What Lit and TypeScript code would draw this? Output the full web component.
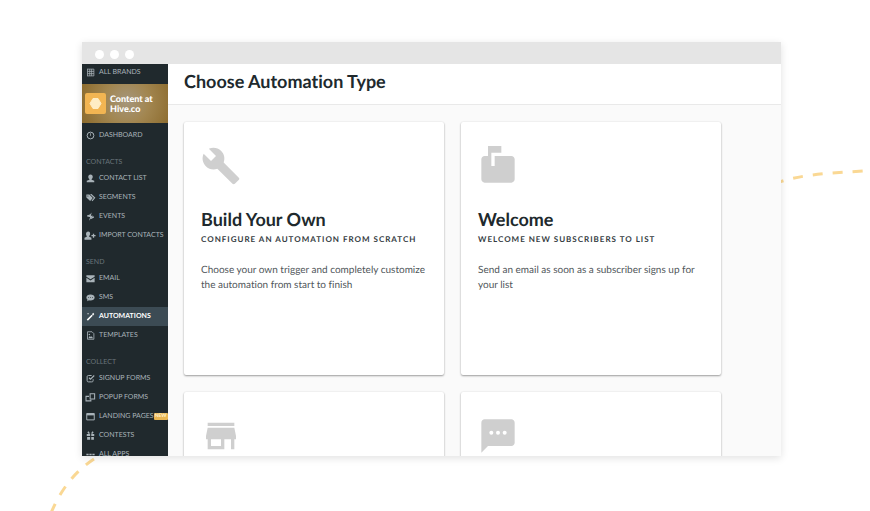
import { LitElement, html, css, svg } from "lit";
import { customElement, property } from "lit/decorators.js";

const icons: Record<string, unknown> = {
  brands: svg`<path d="M4 2v20M10 3v18M15 3v18M21 3v18M4 3h17M4 9h17M4 15h17M4 21h17" fill="none" stroke="currentColor" stroke-width="2"/>`,
  dashboard: svg`<circle cx="12" cy="12" r="9" fill="none" stroke="currentColor" stroke-width="2.6"/><path d="M11 6h2v6l-1 2-1-2z"/>`,
  person: svg`<path d="M12 1c4 0 6 3 6 6 0 3-1.500 5-3 6v2l7 3v4H2v-4l7-3v-2c-1.500-1-3-3-3-6 0-3 2-6 6-6z"/>`,
  tags: svg`<path d="M1 4h8l9 9-7 8-10-9z"/><path d="M12 4h2l9 9-7 8" fill="none" stroke="currentColor" stroke-width="3"/><circle cx="5" cy="8" r="1.500" fill="#20292d"/>`,
  events: svg`<path d="M15 1L5 13h6l-3 10 11-13h-6z"/><path d="M3 11l8-3M13 17l8-4" stroke="currentColor" stroke-width="3"/>`,
  personAdd: svg`<path d="M6 1c4 0 5 3 5 6s-1 4.500-2.500 6v2l6 3v5H-4v-5l6-3v-2C.5 11.500 0 10 0 7s2-6 6-6z"/><path d="M20 7v11M14.500 12.500h11" stroke="currentColor" stroke-width="3.500"/>`,
  email: svg`<path d="M1 3h22v4l-11 7L1 7zM1 10l11 7 11-7v12H1z"/>`,
  sms: svg`<path d="M12 4c6 0 11 3 11 8s-5 8-11 8c-2 0-3 0-4-.5L3 22l1-4c-2-2-3-4-3-6 0-5 5-8 11-8z"/><path d="M6 11h2v2H6zM11 11h2v2h-2zM16 11h2v2h-2z" fill="#20292d"/>`,
  wand: svg`<path d="M2 20L15 7l3 3L5 23zM16 6l3-4 3 3-3 4zM4 3h3v3H4z"/>`,
  templates: svg`<path d="M4 2h12l5 5v15H4z" fill="none" stroke="currentColor" stroke-width="2.200"/><path d="M6 19l4-6 3 3 2-2 4 5z"/><circle cx="9" cy="9" r="2"/>`,
  signup: svg`<path d="M15 4H7C4 4 3 5 3 8v9c0 3 1 4 4 4h8c3 0 4-1 4-4v-3" fill="none" stroke="currentColor" stroke-width="2.600"/><path d="M8 10l4 4L22 4" fill="none" stroke="currentColor" stroke-width="3"/>`,
  popup: svg`<path d="M11 2h12v14H11zM8 9H0v12h13v-3" fill="none" stroke="currentColor" stroke-width="2.800"/>`,
  landing: svg`<path d="M2 4h20v17H2z" fill="none" stroke="currentColor" stroke-width="2.600"/><path d="M2 4h20v5H2z"/>`,
  contests: svg`<path d="M2 8h9v5H2zM14 8h8v5h-8zM3 16h8v7H3zM14 16h7v7h-7z"/><path d="M9 7L5 2M15 7l4-5" stroke="currentColor" stroke-width="4"/>`,
  apps: svg`<path d="M1 10h6v4H1zM9 10h6v4H9zM17 10h6v4h-6z"/>`,
  build: svg`<path d="M22.700 19l-9.100-9.100c.9-2.300.4-5-1.500-6.900-2-2-5-2.400-7.400-1.300L9 6 6 9 1.600 4.700C.4 7.100.9 10.100 2.900 12.100c1.900 1.900 4.600 2.400 6.900 1.500l9.100 9.100c.4.4 1 .4 1.400 0l2.300-2.300c.5-.4.5-1.100.1-1.400z"/>`,
  mailbox: svg`<path d="M20 6H10v6H8V4h6V0H6v6H4c-1.100 0-2 .9-2 2v12c0 1.100.9 2 2 2h16c1.100 0 2-.9 2-2V8c0-1.100-.9-2-2-2z"/>`,
  store: svg`<path d="M20 4H4v2h16V4zm1 10v-2l-1-5H4l-1 5v2h1v6h10v-6h4v6h2v-6h1zm-9 4H6v-4h6v4z"/>`,
  chat: svg`<path d="M20 2H4c-1.100 0-1.990.9-1.990 2L2 22l4-4h14c1.100 0 2-.9 2-2V4c0-1.100-.9-2-2-2z"/><g fill="#fff"><circle cx="8" cy="10" r="1.200"/><circle cx="12" cy="10" r="1.200"/><circle cx="16" cy="10" r="1.200"/></g>`,
};

const icon = (name: string) =>
  html`<svg class="icon" viewBox="0 0 24 24" fill="currentColor" aria-hidden="true">${icons[name]}</svg>`;

interface Item { label: string; icon: string; active?: boolean; badge?: string }
interface Group { title: string; items: Item[] }

const groups: Group[] = [
  { title: "Contacts", items: [
    { label: "Contact List", icon: "person" },
    { label: "Segments", icon: "tags" },
    { label: "Events", icon: "events" },
    { label: "Import Contacts", icon: "personAdd" },
  ] },
  { title: "Send", items: [
    { label: "Email", icon: "email" },
    { label: "SMS", icon: "sms" },
    { label: "Automations", icon: "wand", active: true },
    { label: "Templates", icon: "templates" },
  ] },
  { title: "Collect", items: [
    { label: "Signup Forms", icon: "signup" },
    { label: "Popup Forms", icon: "popup" },
    { label: "Landing Pages", icon: "landing", badge: "NEW" },
    { label: "Contests", icon: "contests" },
    { label: "All Apps", icon: "apps" },
  ] },
];

@customElement("side-nav")
export class SideNav extends LitElement {
  static styles = css`
    :host { display: block; overflow: hidden; background: #20292d; color: #a9b3b9; box-sizing: border-box; }
    .icon { width: 9px; height: 9px; flex: none; overflow: visible; }
    ul { list-style: none; margin: 0; padding: 0; }
    .item {
      display: flex; align-items: center; gap: 4px; height: 19px; padding-left: 4px;
      font-size: 7px; line-height: 9px; text-transform: uppercase; white-space: nowrap;
      color: inherit; text-decoration: none;
    }
    .top { height: 16px; padding-bottom: 4px; }
    .active { background: #3c4b54; color: #fff; font-weight: 700; }
    .brand {
      display: flex; align-items: center; gap: 4px; height: 39px; padding-left: 3px; margin-bottom: 3px;
      background: radial-gradient(circle at 52% 45%, #a5967c 0, #a28650 45%, #8b6a2c 100%);
    }
    .logo { width: 21px; height: 21px; flex: none; border-radius: 2px; background: #f2b552; }
    .name { color: #fff; font-size: 9px; line-height: 10px; font-weight: 900; }
    .title {
      margin: 0; padding: 10px 0 0 4px; height: 14px;
      font-size: 7px; line-height: 14px; font-weight: 400; text-transform: uppercase; color: #69747a;
    }
    .badge {
      margin-left: -4px; width: 14px; border-radius: 1px; background: #e8b552; color: #fff1cf;
      font-size: 5px; line-height: 7px; font-weight: 700; text-align: center;
    }
  `;

  private row(i: Item) {
    return html`<li><a class="item ${i.active ? "active" : ""}" href="#">
      ${icon(i.icon)}<span>${i.label}</span>${i.badge ? html`<span class="badge">${i.badge}</span>` : ""}
    </a></li>`;
  }

  render() {
    return html`<nav>
      <a class="item top" href="#">${icon("brands")}<span>All Brands</span></a>
      <div class="brand">
        <svg class="logo" viewBox="0 0 21 21" aria-hidden="true">
          <path d="M8 5.500h5l3 5-3 5H8l-3-5z" fill="#ffedc4" stroke="#ffedc4" stroke-linejoin="round"/>
        </svg>
        <span class="name">Content at<br />Hive.co</span>
      </div>
      <ul>${this.row({ label: "Dashboard", icon: "dashboard" })}</ul>
      ${groups.map((g) => html`<h2 class="title">${g.title}</h2><ul>${g.items.map((i) => this.row(i))}</ul>`)}
    </nav>`;
  }
}

@customElement("type-card")
export class TypeCard extends LitElement {
  @property() icon = "";
  @property() heading = "";
  @property() tagline = "";
  @property() text = "";

  static styles = css`
    :host { display: block; }
    .card {
      display: block; box-sizing: border-box; min-height: 253px; padding: 24px 17px;
      background: #fff; border-radius: 2px; color: #50565a; text-decoration: none;
      box-shadow: 0 1px 2px rgba(0, 0, 0, 0.36), 0 0 2px rgba(0, 0, 0, 0.08);
    }
    .icon { display: block; width: 40px; height: 40px; color: #cfcfcf; }
    .heading { margin: 21px 0 0; font-size: 18px; line-height: 24px; font-weight: 700; color: #20292d; }
    .tagline {
      margin: 0; font-size: 8px; line-height: 16px; font-weight: 700; letter-spacing: 1px;
      text-transform: uppercase; color: #343b3f;
    }
    .text { margin: 16px 0 0; font-size: 10px; line-height: 15px; }
  `;

  render() {
    return html`<a class="card" href="#">
      ${icon(this.icon)}
      ${this.heading ? html`
        <h2 class="heading">${this.heading}</h2>
        <p class="tagline">${this.tagline}</p>
        <p class="text">${this.text}</p>` : ""}
    </a>`;
  }
}

@customElement("app-root")
export class AppRoot extends LitElement {
  static styles = css`
    :host {
      display: flex; position: relative; box-sizing: border-box; height: 100vh; overflow: hidden;
      padding: 42px 89px 55px 82px; background: #fff; font-family: Lato, "Liberation Sans", sans-serif;
      text-rendering: geometricPrecision; font-variant-ligatures: none;
    }
    .trail { position: absolute; fill: none; stroke: #fad894; stroke-width: 3; stroke-dasharray: 10 10; }
    .right { right: 0; top: 160px; width: 90px; height: 30px; }
    .left { left: 40px; bottom: 0; width: 60px; height: 60px; }
    .window {
      flex: 1; min-width: 0; display: flex; flex-direction: column;
      overflow: hidden; background: #fafafa;
    }
    .frame { display: flex; flex: 1; min-width: 0; position: relative; box-shadow: 0 2px 8px rgba(0, 0, 0, 0.12); }
    .bar { display: flex; align-items: center; gap: 6px; height: 22px; padding: 2px 0 0 13px; box-sizing: border-box; background: #e5e5e5; }
    .dot { width: 9px; height: 9px; border-radius: 50%; background: #fff; }
    .body { display: grid; grid-template-columns: 86px minmax(0, 1fr); flex: 1; min-height: 0; }
    .main { overflow: hidden; }
    .header { padding: 5px 16px 11px; background: #fff; border-bottom: 1px solid #e9e9e9; }
    .title { margin: 0; font-size: 18px; line-height: 24px; font-weight: 700; color: #20292d; }
    .cards { display: grid; grid-template-columns: repeat(auto-fill, minmax(0, 260px)); gap: 17px; padding: 17px 16px; }
  `;

  render() {
    return html`
      <svg class="trail right" viewBox="0 0 90 30" aria-hidden="true">
        <path d="M-6 24C20 14 50 13 84 11"/>
      </svg>
      <svg class="trail left" viewBox="0 0 60 60" aria-hidden="true">
        <path d="M54 8C36 20 22 36 11 62"/>
      </svg>
      <div class="frame"><div class="window">
        <div class="bar"><i class="dot"></i><i class="dot"></i><i class="dot"></i></div>
        <div class="body">
          <side-nav></side-nav>
          <main class="main">
            <header class="header"><h1 class="title">Choose Automation Type</h1></header>
            <div class="cards">
              <type-card icon="build" heading="Build Your Own" tagline="Configure an automation from scratch"
                text="Choose your own trigger and completely customize the automation from start to finish"></type-card>
              <type-card icon="mailbox" heading="Welcome" tagline="Welcome new subscribers to list"
                text="Send an email as soon as a subscriber signs up for your list"></type-card>
              <type-card icon="store"></type-card>
              <type-card icon="chat"></type-card>
            </div>
          </main>
        </div>
      </div></div>
    `;
  }
}
